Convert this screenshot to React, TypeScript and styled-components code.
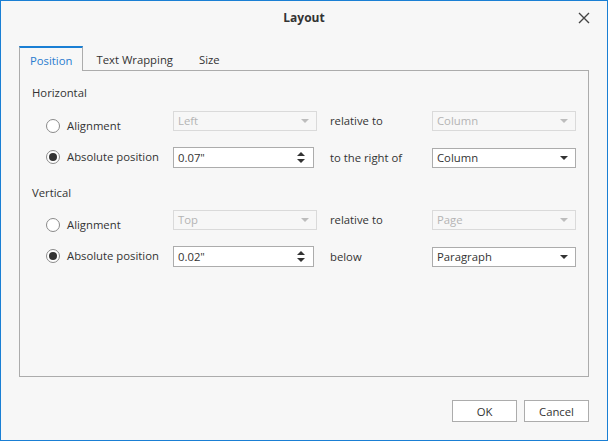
import React from 'react';
import styled, { createGlobalStyle } from 'styled-components';

const GlobalStyle = createGlobalStyle`
    html, body {
        margin: 0;
        padding: 0;
        background: #f7f7f7;
    }
    * {
        box-sizing: border-box;
    }
`;

const Dialog = styled.div`
    width: 608px;
    height: 441px;
    display: flex;
    flex-direction: column;
    background: #f7f7f7;
    border: 1px solid #1a7fd4;
    font-family: 'Open Sans', 'Liberation Sans', sans-serif;
    font-size: 11.3px;
    color: #333;
`;

const TitleBar = styled.div`
    height: 33px;
    display: flex;
    align-items: center;
    justify-content: center;
    position: relative;
    font-weight: bold;
    font-size: 12px;
    color: #333;
`;

const CloseButton = styled.div`
    position: absolute;
    right: 17px;
    top: 11px;
    width: 12px;
    height: 12px;
    display: flex;
    align-items: center;
    justify-content: center;
`;

const Body = styled.div`
    flex: 1;
    display: flex;
    flex-direction: column;
    padding: 11px 18px 18px 18px;
`;

const TabStrip = styled.div`
    display: flex;
    align-items: flex-end;
    height: 25px;
`;

const Tab = styled.div<{ active?: boolean }>`
    height: ${(p) => (p.active ? '25px' : '24px')};
    padding: 1px ${(p) => (p.active ? '10px' : '12px')} 0;
    display: flex;
    align-items: center;
    color: ${(p) => (p.active ? '#2a7ccf' : '#333')};
    background: #f7f7f7;
    border: ${(p) => (p.active ? '1px solid #acacac' : '1px solid transparent')};
    border-top: ${(p) => (p.active ? '2px solid #1a7fd4' : '1px solid transparent')};
    border-bottom: none;
    margin-bottom: ${(p) => (p.active ? '-1px' : '0')};
    position: relative;
    z-index: 1;
`;

const Panel = styled.div`
    height: 307px;
    border: 1px solid #acacac;
    padding: 14px 12px 0 12px;
`;

const SectionLabel = styled.div`
    height: 16px;
    line-height: 16px;
`;

const Grid = styled.div<{ top: number }>`
    display: grid;
    grid-template-columns: 141px 144px 115px 144px;
    grid-auto-rows: 21px;
    row-gap: 16px;
    margin-top: ${(p) => p.top}px;
    margin-bottom: 17px;
    align-items: center;
`;

const RadioLabel = styled.label`
    display: flex;
    align-items: center;
    gap: 7px;
    padding-left: 14px;
    margin-top: 10px;
    &.second {
        margin-top: -2px;
    }
`;

const RadioCircle = styled.span<{ checked?: boolean }>`
    width: 14px;
    height: 14px;
    border-radius: 50%;
    border: 1px solid #8a8a8a;
    background: #fff;
    display: flex;
    align-items: center;
    justify-content: center;
    &::after {
        content: '';
        display: ${(p) => (p.checked ? 'block' : 'none')};
        width: 8px;
        height: 8px;
        border-radius: 50%;
        background: #333;
    }
`;

const FieldLabel = styled.span`
    padding-left: 13px;
`;

const Box = styled.div<{ disabled?: boolean; narrow?: boolean }>`
    width: ${(p) => (p.narrow ? '141px' : '144px')};
    height: ${(p) => (p.narrow ? '21px' : '20px')};
    border: 1px solid ${(p) => (p.disabled ? '#dadada' : '#acacac')};
    background: ${(p) => (p.disabled ? '#f7f7f7' : '#fff')};
    color: ${(p) => (p.disabled ? '#b4b4b4' : '#333')};
    display: flex;
    align-items: center;
    justify-content: space-between;
    padding: 0 6px 0 4px;
`;

const Arrow = styled.span<{ disabled?: boolean }>`
    width: 0;
    height: 0;
    border-left: 4px solid transparent;
    border-right: 4px solid transparent;
    border-top: 4px solid ${(p) => (p.disabled ? '#bdbdbd' : '#333')};
    margin-right: 1px;
`;

const Spin = styled.span`
    display: flex;
    flex-direction: column;
    gap: 3px;
    margin-right: 2px;
`;

const SpinArrow = styled.span<{ up?: boolean }>`
    width: 0;
    height: 0;
    border-left: 4px solid transparent;
    border-right: 4px solid transparent;
    ${(p) => (p.up ? 'border-bottom: 4px solid #333;' : 'border-top: 4px solid #333;')}
`;

const Footer = styled.div`
    display: flex;
    justify-content: flex-end;
    gap: 7px;
    margin-top: auto;
`;

const Button = styled.div`
    width: 65px;
    height: 22px;
    border: 1px solid #acacac;
    background: #fff;
    display: flex;
    align-items: center;
    justify-content: center;
`;

const Combo: React.FC<{ value: string; disabled?: boolean }> = ({ value, disabled }) => (
    <Box disabled={disabled}>
        <span>{value}</span>
        <Arrow disabled={disabled} />
    </Box>
);

const SpinBox: React.FC<{ value: string }> = ({ value }) => (
    <Box narrow>
        <span>{value}</span>
        <Spin>
            <SpinArrow up />
            <SpinArrow />
        </Spin>
    </Box>
);

interface SectionProps {
    title: string;
    first: string;
    relative: string;
    relativeTo: string;
    offset: string;
    direction: string;
    target: string;
    top: number;
}

const Section: React.FC<SectionProps> = (props) => (
    <>
        <SectionLabel>{props.title}</SectionLabel>
        <Grid top={props.top}>
            <RadioLabel>
                <RadioCircle />
                Alignment
            </RadioLabel>
            <Combo value={props.first} disabled />
            <FieldLabel>{props.relative}</FieldLabel>
            <Combo value={props.relativeTo} disabled />
            <RadioLabel className="second">
                <RadioCircle checked />
                Absolute position
            </RadioLabel>
            <SpinBox value={props.offset} />
            <FieldLabel>{props.direction}</FieldLabel>
            <Combo value={props.target} />
        </Grid>
    </>
);

const App: React.FC = () => (
    <>
        <GlobalStyle />
        <Dialog>
            <TitleBar>
                Layout
                <CloseButton>
                    <svg width="12" height="12" viewBox="0 0 12 12">
                        <path d="M1 1L11 11M11 1L1 11" stroke="#444" strokeWidth="1.4" />
                    </svg>
                </CloseButton>
            </TitleBar>
            <Body>
                <TabStrip>
                    <Tab active>Position</Tab>
                    <Tab>Text Wrapping</Tab>
                    <Tab>Size</Tab>
                </TabStrip>
                <Panel>
                    <Section
                        title="Horizontal"
                        first="Left"
                        relative="relative to"
                        relativeTo="Column"
                        offset={'0.07"'}
                        direction="to the right of"
                        target="Column"
                        top={9}
                    />
                    <Section
                        title="Vertical"
                        first="Top"
                        relative="relative to"
                        relativeTo="Page"
                        offset={'0.02"'}
                        direction="below"
                        target="Paragraph"
                        top={8}
                    />
                </Panel>
                <Footer>
                    <Button>OK</Button>
                    <Button>Cancel</Button>
                </Footer>
            </Body>
        </Dialog>
    </>
);

export default App;
